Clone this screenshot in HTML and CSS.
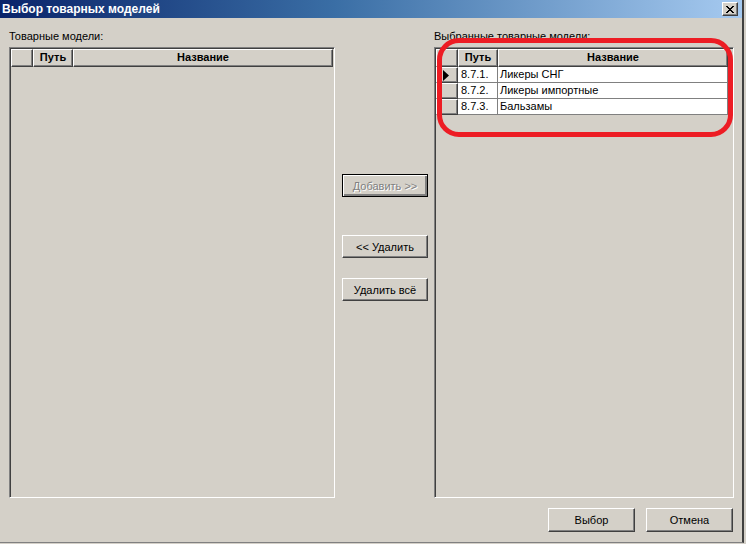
FILE: index.html
```html
<!DOCTYPE html>
<html lang="ru">
<head>
<meta charset="utf-8">
<title>Выбор товарных моделей</title>
<link rel="stylesheet" href="styles.css">
</head>
<body>
<div class="window">
  <div class="titlebar">
    <span class="title">Выбор товарных моделей</span>
    <button class="close-btn" type="button" aria-label="Закрыть">
      <svg width="8" height="7" viewBox="0 0 8 7" aria-hidden="true">
        <path d="M0 0h2v1h1v1h2v-1h1v-1h2v1h-1v1h-1v1h-1v1h1v1h1v1h1v1h-2v-1h-1v-1h-2v1h-1v1h-2v-1h1v-1h1v-1h1v-1h-1v-1h-1v-1h-1z" fill="#000"/>
      </svg>
    </button>
  </div>

  <div class="content">
    <div class="panels">
      <section class="panel panel-left">
        <div class="caption">Товарные модели:</div>
        <div class="grid grid-left">
          <div class="grid-row grid-head">
            <div class="cell ind head-cell"></div>
            <div class="cell col-path head-cell">Путь</div>
            <div class="cell col-name-wide head-cell">Название</div>
          </div>
        </div>
      </section>

      <div class="actions">
        <button class="btn btn-default" type="button" disabled><span>Добавить &gt;&gt;</span></button>
        <button class="btn btn-remove" type="button">&lt;&lt; Удалить</button>
        <button class="btn btn-remove-all" type="button">Удалить всё</button>
      </div>

      <section class="panel panel-right">
        <div class="caption">Выбранные товарные модели:</div>
        <div class="grid grid-right">
          <div class="grid-row grid-head">
            <div class="cell ind head-cell"></div>
            <div class="cell col-path head-cell">Путь</div>
            <div class="cell col-name head-cell">Название</div>
          </div>
          <div class="grid-row">
            <div class="cell ind ind-row">
              <svg width="6" height="11" viewBox="0 0 6 11" aria-hidden="true"><path d="M0 0L6 5.5L0 11Z" fill="#000"/></svg>
            </div>
            <div class="cell col-path data">8.7.1.</div>
            <div class="cell col-name data">Ликеры СНГ</div>
          </div>
          <div class="grid-row">
            <div class="cell ind ind-row"></div>
            <div class="cell col-path data">8.7.2.</div>
            <div class="cell col-name data">Ликеры импортные</div>
          </div>
          <div class="grid-row">
            <div class="cell ind ind-row"></div>
            <div class="cell col-path data">8.7.3.</div>
            <div class="cell col-name data">Бальзамы</div>
          </div>
        </div>
        <div class="highlight"></div>
      </section>
    </div>

    <div class="footer">
      <button class="btn btn-footer" type="button">Выбор</button>
      <button class="btn btn-footer" type="button">Отмена</button>
    </div>
  </div>
</div>
</body>
</html>
```

FILE: styles.css
```css
html, body {
  margin: 0;
  padding: 0;
  background: #d4d0c8;
}

body {
  width: 746px;
  height: 544px;
  overflow: hidden;
  font-family: "Liberation Sans", Arial, sans-serif;
  font-size: 11px;
  color: #000;
}

/* dialog frame */
.window {
  width: 744px;
  height: 543px;
  box-sizing: border-box;
  background: #d4d0c8;
  border-right: 2px solid #404040;
  border-bottom: 1px solid #808080;
  display: flex;
  flex-direction: column;
}

.titlebar {
  height: 18px;
  flex: none;
  display: flex;
  align-items: center;
  padding: 0 4px 0 2px;
  background: linear-gradient(to right, #0a246a 0%, #3a6ea5 45%, #a6caf0 100%);
}

.title {
  color: #fff;
  font-weight: bold;
  font-size: 12px;
  line-height: 14px;
  white-space: nowrap;
}

.close-btn {
  margin-left: auto;
  width: 16px;
  height: 14px;
  padding: 0;
  background: #d4d0c8;
  border: 1px solid;
  border-color: #fff #404040 #404040 #fff;
  box-shadow: inset -1px -1px 0 #808080;
  display: flex;
  align-items: center;
  justify-content: center;
}

.close-btn svg {
  display: block;
  margin-left: -1px;
}

/* main area */
.content {
  flex: 1;
  display: flex;
  flex-direction: column;
  padding: 12px 0 0 9px;
}

.panels {
  display: flex;
  align-items: flex-start;
}

.panel {
  display: flex;
  flex-direction: column;
}

.panel-left {
  width: 326px;
}

.panel-right {
  width: 300px;
  position: relative;
}

.caption {
  height: 13px;
  line-height: 13px;
  margin-bottom: 4px;
  white-space: nowrap;
}

/* sunken grid box */
.grid {
  height: 451px;
  box-sizing: border-box;
  border: 1px solid;
  border-color: #808080 #fff #fff #808080;
  box-shadow: inset 1px 1px 0 #404040, inset -1px -1px 0 #d4d0c8;
  padding: 1px;
  background: #d4d0c8;
}

.grid-row {
  display: flex;
  height: 16px;
}

.grid-head {
  height: 18px;
}

.cell {
  box-sizing: border-box;
  height: 100%;
  white-space: nowrap;
  overflow: hidden;
}

.ind {
  width: 22px;
}

.col-path {
  width: 40px;
}

.col-name {
  width: 230px;
}

.col-name-wide {
  width: 260px;
}

.head-cell {
  background: #d4d0c8;
  border: 1px solid;
  border-color: #fff #404040 #404040 #fff;
  box-shadow: inset -1px -1px 0 #808080;
  font-weight: bold;
  text-align: center;
  line-height: 15px;
}

.ind-row {
  background: #d4d0c8;
  border: 1px solid;
  border-color: #fff #404040 #404040 #fff;
  box-shadow: inset -1px -1px 0 #808080;
  display: flex;
  align-items: center;
  padding-left: 6px;
}

.data {
  background: #fff;
  border-right: 1px solid #808080;
  border-bottom: 1px solid #808080;
  padding-left: 2px;
  line-height: 15px;
}

.col-path.data {
  padding-left: 3px;
}

/* marker drawn around the selected list */
.highlight {
  position: absolute;
  left: 3px;
  top: 8px;
  width: 296px;
  height: 99px;
  box-sizing: border-box;
  border: 5px solid #ed1c24;
  border-radius: 22px;
  pointer-events: none;
}

/* buttons */
.actions {
  width: 86px;
  margin: 144px 6px 0 7px;
  display: flex;
  flex-direction: column;
}

.btn {
  font-family: "Liberation Sans", Arial, sans-serif;
  font-size: 11px;
  color: #000;
  background: #d4d0c8;
  box-sizing: border-box;
  height: 23px;
  padding: 0;
  border: 1px solid;
  border-color: #fff #404040 #404040 #fff;
  box-shadow: inset -1px -1px 0 #808080;
  white-space: nowrap;
}

.btn-default {
  border: 1px solid #000;
  box-shadow: inset 1px 1px 0 #fff, inset -2px -2px 0 #808080;
  color: #808080;
  text-shadow: 1px 1px 0 #fff;
}

.btn-remove {
  margin-top: 38px;
}

.btn-remove-all {
  margin-top: 20px;
}

.footer {
  display: flex;
  justify-content: flex-end;
  gap: 11px;
  margin-top: 10px;
  padding-right: 9px;
}

.btn-footer {
  width: 87px;
  height: 24px;
}
```
